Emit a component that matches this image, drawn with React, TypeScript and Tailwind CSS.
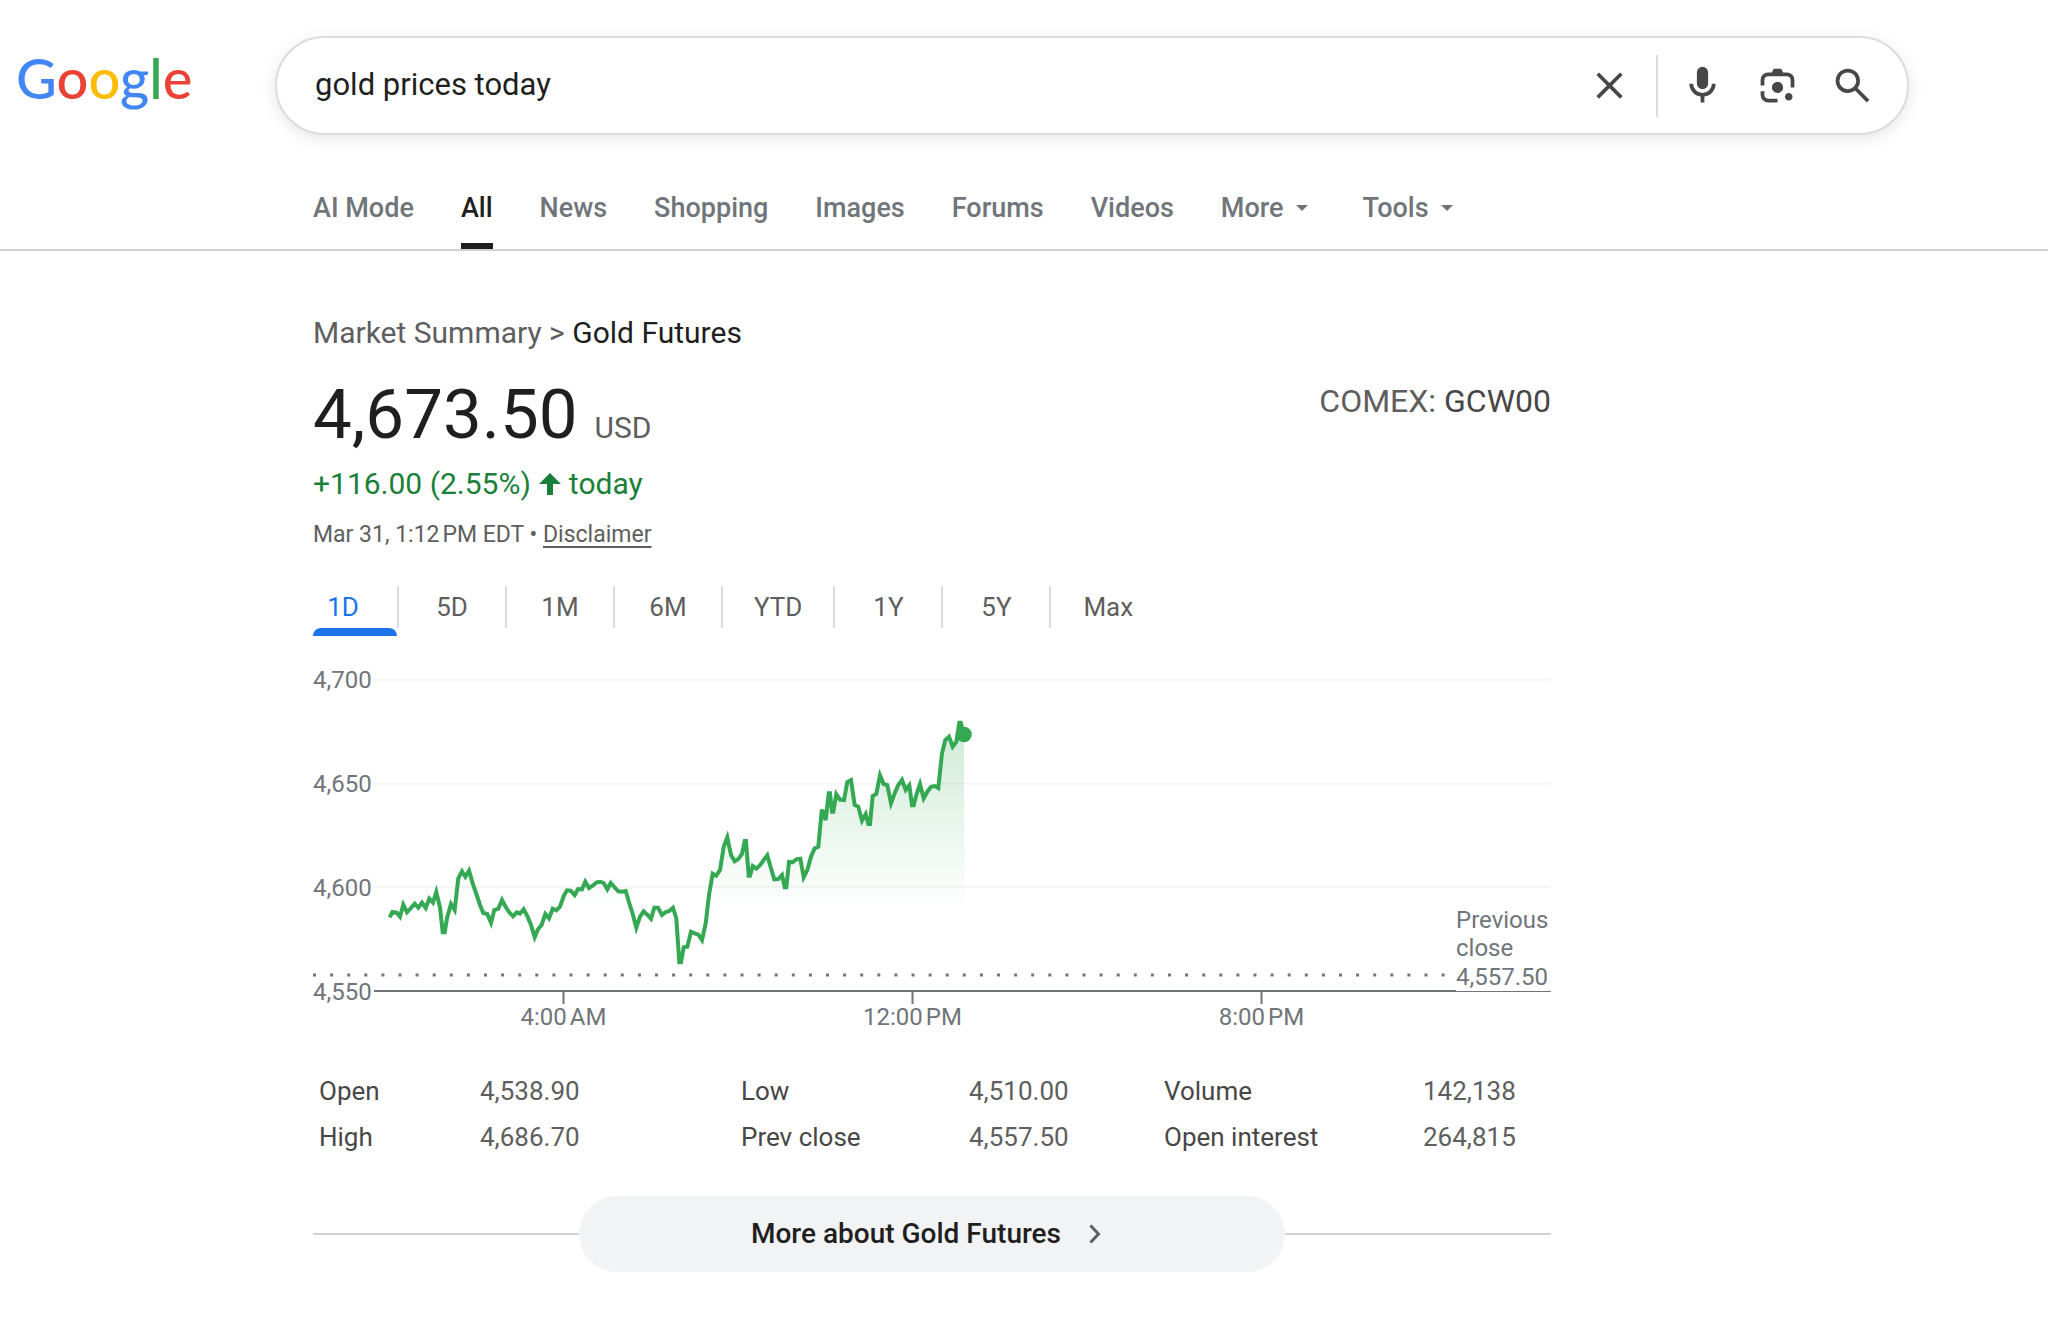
import {useState} from 'react';

const tabs = ['AI Mode', 'All', 'News', 'Shopping', 'Images', 'Forums', 'Videos'];
const ranges = ['1D', '5D', '1M', '6M', 'YTD', '1Y', '5Y', 'Max'];

const stats = [
    [['Open', '4,538.90'], ['Low', '4,510.00'], ['Volume', '142,138']],
    [['High', '4,686.70'], ['Prev close', '4,557.50'], ['Open interest', '264,815']],
];

const ticks = [
    [269,772],[277,756],[290,758],[300,770],[310,734],[321,757],[333,744],[344,731],[355,743],[366,728],
    [377,744],[388,716],[399,728],[409,696],[420,742],[428,817],[434,817],[441,775],[453,732],[464,750],
    [475,655],[486,634],[496,650],[507,632],[518,670],[530,705],[540,735],[550,759],[562,762],[573,788],
    [583,750],[595,746],[606,720],[617,741],[628,757],[639,769],[650,757],[660,761],[671,748],[682,768],
    [693,795],[704,832],[714,808],[725,794],[736,762],[747,775],[758,746],[769,751],[780,740],[791,708],
    [801,691],[812,692],[824,705],[834,687],[846,688],[856,665],[867,684],[878,677],[890,667],[901,665],
    [911,669],[922,688],[932,669],[943,681],[955,694],[966,695],[977,693],[988,730],[999,765],[1009,803],
    [1020,770],[1031,754],[1042,764],[1053,776],[1063,743],[1074,743],[1086,765],[1097,756],[1108,753],
    [1119,743],[1129,775],[1138,907],[1143,907],[1151,862],[1162,860],[1173,815],[1184,820],[1195,824],
    [1206,840],[1217,790],[1227,705],[1238,641],[1249,647],[1260,630],[1271,560],[1282,532],[1293,585],
    [1304,604],[1315,597],[1326,582],[1334,543],[1338,543],[1346,647],[1350,647],[1358,618],[1369,626],
    [1380,616],[1391,600],[1402,586],[1413,625],[1423,658],[1435,657],[1446,645],[1454,682],[1459,682],
    [1467,606],[1478,607],[1489,598],[1501,596],[1511,652],[1522,630],[1533,590],[1544,565],[1555,560],
    [1565,454],[1568,454],[1577,480],[1586,400],[1590,400],[1596,455],[1600,455],[1609,403],[1620,419],
    [1632,420],[1642,366],[1653,360],[1664,435],[1675,440],[1686,482],[1697,462],[1705,492],[1710,492],
    [1718,408],[1729,402],[1740,346],[1751,372],[1762,375],[1773,430],[1784,400],[1795,375],[1806,360],
    [1817,390],[1828,376],[1836,436],[1841,436],[1849,405],[1860,372],[1871,415],[1882,395],[1893,380],
    [1904,378],[1915,384],[1926,280],[1936,240],[1947,230],[1958,260],[1969,246],[1978,188],[1982,188],[1992,223],
];
const line = ticks.map(([t, v]) => `${(t / 3 - 13).toFixed(1)},${(v / 3).toFixed(1)}`).join(' ');

const icons = {
    clear: 'm256-200-56-56 224-224-224-224 56-56 224 224 224-224 56 56-224 224 224 224-56 56-224-224-224 224Z',
    mic: 'M480-400q-50 0-85-35t-35-85v-240q0-50 35-85t85-35q50 0 85 35t35 85v240q0 50-35 85t-85 35Zm-40 280v-123q-104-14-172-93t-68-184h80q0 83 58.5 141.5T480-320q83 0 141.5-58.5T680-520h80q0 105-68 184t-172 93v123h-80Z',
    lens: 'M480-320q-50 0-85-35t-35-85q0-50 35-85t85-35q50 0 85 35t35 85q0 50-35 85t-85 35Zm240 160q-33 0-56.5-23.5T640-240q0-33 23.5-56.5T720-320q33 0 56.5 23.5T800-240q0 33-23.5 56.5T720-160Zm-440 40q-66 0-113-47t-47-113v-80h80v80q0 33 23.5 56.5T280-200h200v80H280Zm480-320v-160q0-33-23.5-56.5T680-680H280q-33 0-56.5 23.5T200-600v120h-80v-120q0-66 47-113t113-47h80l40-80h160l40 80h80q66 0 113 47t47 113v160h-80Z',
    search: 'M784-120 532-372q-30 24-69 38t-83 14q-109 0-184.5-75.5T120-580q0-109 75.5-184.5T380-840q109 0 184.5 75.5T640-580q0 44-14 83t-38 69l252 252-56 56ZM380-400q75 0 127.5-52.5T560-580q0-75-52.5-127.5T380-760q-75 0-127.5 52.5T200-580q0 75 52.5 127.5T380-400Z',
};

const IconButton = ({label, icon, submit}: {label: string, icon: keyof typeof icons, submit?: boolean}) => (
    <button type={submit ? 'submit' : 'button'} aria-label={label} className="shrink-0 text-[#474747]">
        <svg viewBox="0 -960 960 960" className="size-[45px]" fill="currentColor"><path d={icons[icon]}/></svg>
    </button>
);

const Caret = () => (
    <svg viewBox="0 0 12 6" className="h-[6px] w-[12px]" fill="currentColor"><path d="M0 0h12L6 6z"/></svg>
);

const Header = () => {
    const [query, setQuery] = useState('gold prices today');
    return (
        <header className="border-b-2 border-[#d2d2d2] pt-9">
            <div className="flex items-center">
                <a href="#" aria-label="Google" className="w-[275px] shrink-0 pb-4 pl-4 font-['Lato',sans-serif] text-[56px] leading-[60px] font-medium">
                    <span className="text-[#4285f4]">G</span>
                    <span className="text-[#ea4335]">o</span>
                    <span className="text-[#fbbc05]">o</span>
                    <span className="text-[#4285f4]">g</span>
                    <span className="text-[#34a853]">l</span>
                    <span className="text-[#ea4335]">e</span>
                </a>
                <form onSubmit={(e) => e.preventDefault()} className="mr-[139px] flex h-[99px] flex-1 items-center rounded-full border-2 border-[#dadce0] bg-white pr-8 pl-[38px] shadow-[0_4px_16px_rgba(0,0,0,0.1)]">
                    <input type="text" aria-label="Search" value={query} onChange={(e) => setQuery(e.target.value)} className="min-w-0 flex-1 text-[31px] text-[#1f1f1f] outline-none"/>
                    <IconButton label="Clear" icon="clear"/>
                    <div className="ml-6 h-[62px] w-[2px] bg-[#dadce0]"></div>
                    <div className="ml-[22px] flex gap-[30px]">
                        <IconButton label="Search by voice" icon="mic"/>
                        <IconButton label="Search by image" icon="lens"/>
                        <IconButton label="Search" icon="search" submit/>
                    </div>
                </form>
            </div>
            <nav className="mt-12 ml-[313px] flex gap-[47px] text-[27px] leading-[50px] font-medium text-[#70757a]">
                {tabs.map((tab) => (
                    <a key={tab} href="#" className={tab === 'All' ? 'border-b-6 border-[#1f1f1f] pb-[10px] text-[#1f1f1f]' : 'pb-4'}>{tab}</a>
                ))}
                <button type="button" className="mr-2 flex items-center gap-3 pb-4">More <Caret/></button>
                <button type="button" className="flex items-center gap-3 pb-4">Tools <Caret/></button>
            </nav>
        </header>
    );
};

const PriceChart = () => (
    <svg viewBox="0 0 1238 380" className="mt-6 w-full text-[24px]" fill="#70757a" role="img" aria-label="Gold Futures, one day">
        <defs>
            <linearGradient id="fade" x1="0" y1="60" x2="0" y2="250" gradientUnits="userSpaceOnUse">
                <stop offset="0" stopColor="#34a853" stopOpacity="0.24"/>
                <stop offset="1" stopColor="#34a853" stopOpacity="0"/>
            </linearGradient>
        </defs>
        <path d="M61 19.5H1238M61 123.5H1238M61 227H1238" stroke="#f5f5f5" strokeWidth="2"/>
        <text x="0" y="28">4,700</text>
        <text x="0" y="132">4,650</text>
        <text x="0" y="236">4,600</text>
        <text x="0" y="340">4,550</text>
        <polygon points={`77,330 ${line} 652,330`} fill="url(#fade)"/>
        <path d="M0 315H1132" stroke="#70757a" strokeWidth="3" strokeDasharray="3 14.1"/>
        <path d="M61 331H1238M250.5 331v13M599.5 331v13M948.5 331v13" stroke="#70757a" strokeWidth="2"/>
        <polyline points={line} fill="none" stroke="#34a853" strokeWidth="4" strokeMiterlimit="4"/>
        <circle cx="651" cy="74.5" r="7.8" fill="#34a853"/>
        <g textAnchor="middle">
            <text x="250.5" y="365">4:00{'\u202f'}AM</text>
            <text x="599.5" y="365">12:00{'\u202f'}PM</text>
            <text x="948.5" y="365">8:00{'\u202f'}PM</text>
        </g>
        <rect x="1143" y="242" width="95" height="89" fill="#fff"/>
        <text x="1143" y="268">Previous</text>
        <text x="1143" y="296">close</text>
        <text x="1143" y="325">4,557.50</text>
    </svg>
);

const App = () => {
    const [range, setRange] = useState('1D');
    return (
        <div className="min-h-screen bg-white font-['Roboto',sans-serif] text-[#1f1f1f]">
            <Header/>
            <main className="ml-[313px] max-w-[1238px] pt-[62px]">
                <h1 className="text-[30px] leading-[40px]"><span className="text-[#5e5e5e]">Market Summary &gt; </span>Gold Futures</h1>
                <div className="mt-7 flex justify-between">
                    <div className="pt-1">
                        <div className="text-[69px] leading-[60px]">4,673.50 <span className="text-[30px] text-[#5e5e5e]">USD</span></div>
                        <div className="mt-[6px] flex items-center text-[30px] leading-[40px] text-[#188038]">
                            +116.00 (2.55%)
                            <svg viewBox="0 0 22 22" className="mx-2 size-[22px]" fill="currentColor"><path d="M11 0 22 11H14V22H8V11H0z"/></svg>
                            today
                        </div>
                        <div className="mt-4 text-[23px] leading-[30px] text-[#5e5e5e]">Mar 31, 1:12{'\u202f'}PM EDT • <a href="#" className="underline underline-offset-4">Disclaimer</a></div>
                    </div>
                    <div className="text-[32px] leading-[40px] text-[#474747]"><span className="text-[#5e5e5e]">COMEX: </span>GCW00</div>
                </div>
                <div className="mt-9 flex text-[26px] leading-[42px] text-[#5e5e5e]">
                    {ranges.map((r, i) => (
                        <div key={r} className="h-[50px]">
                            <button type="button" onClick={() => setRange(r)} className={i === 0 ? 'w-[86px] border-r-2 border-[#dadce0] pr-6' : i === 7 ? 'px-8' : 'min-w-[108px] border-r-2 border-[#dadce0] px-[31px]'}>
                                <span className={r === range ? 'text-[#1a73e8]' : ''}>{r}</span>
                            </button>
                            {r === range && <div className="mr-[2px] h-2 rounded-t-full bg-[#1a73e8]"></div>}
                        </div>
                    ))}
                </div>
                <PriceChart/>
                <table className="mt-7 w-full table-fixed text-left text-[26px] leading-[46px]">
                    <colgroup>
                        <col className="w-[167px]"/><col className="w-[255px]"/><col className="w-[234px]"/>
                        <col className="w-[189px]"/><col className="w-[265px]"/><col/>
                    </colgroup>
                    <tbody>
                        {stats.map((row, i) => (
                            <tr key={i}>
                                {row.map(([name, value]) => [
                                    <th key={name} scope="row" className="pl-[6px] font-normal text-[#474747]">{name}</th>,
                                    <td key={value + name} className="text-[#5e5e5e]">{value}</td>,
                                ])}
                            </tr>
                        ))}
                    </tbody>
                </table>
                <div className="mt-9 flex items-center">
                    <div className="h-[2px] flex-1 bg-[#d2d2d2]"></div>
                    <button type="button" className="flex h-[76px] w-[706px] items-center justify-center gap-7 rounded-full bg-[#f1f3f4] pr-3 text-[28px] font-medium">
                        More about Gold Futures
                        <svg viewBox="0 0 12 20" className="h-5 w-3" fill="none" stroke="#5e5e5e" strokeWidth="3"><path d="m1.5 1.5 8 8.5-8 8.5"/></svg>
                    </button>
                    <div className="h-[2px] flex-1 bg-[#d2d2d2]"></div>
                </div>
            </main>
        </div>
    );
};

export default App;
